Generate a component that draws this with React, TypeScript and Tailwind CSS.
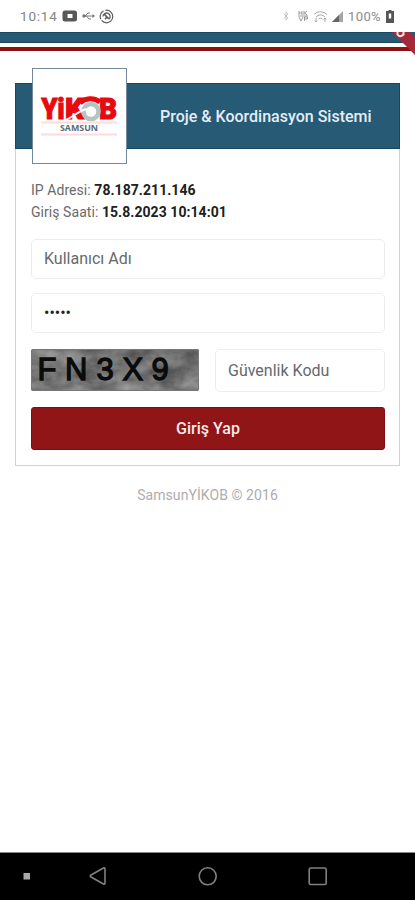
import type { ReactNode } from "react";
import { Bluetooth } from "lucide-react";

function StatusBar() {
  return (
    <div className="flex h-8 items-center justify-between pl-5 pr-[21px]">
      <div className="flex items-center">
        <span className="w-[38px] text-[13.500px] tracking-[0.060em] text-[#858585]">10:14</span>
        <svg className="ml-1" width="16" height="12" viewBox="0 0 16 12">
          <rect x="0.5" y="0.5" width="14.5" height="11" rx="2.5" fill="#585858" />
          <path d="M5.500 4h5v4h-5z" fill="#fff" />
        </svg>
        <svg className="ml-1" width="13" height="12" viewBox="0 0 13 12" fill="none" stroke="#777">
          <path d="M1 6h11M3 6l3-3h2M4.500 6l2.500 3h2" />
          <path d="M10.500 4L13 6l-2.500 2z" fill="#777" stroke="none" />
          <circle cx="2" cy="6" r="1.700" fill="#777" stroke="none" />
        </svg>
        <svg className="ml-1" width="15" height="15" viewBox="0 0 16 16" fill="none" stroke="#606060">
          <circle cx="8" cy="8" r="6.700" strokeWidth="1.300" strokeDasharray="16 1.500 10 2" />
          <path d="M4.300 8a3.800 3.800 0 1 1 6.500 2.800" strokeWidth="1.400" />
          <path d="M5.500 5.500l5 5M6.500 11l1.500-2" strokeWidth="1.700" />
        </svg>
      </div>
      <div className="flex items-center">
        <Bluetooth className="h-3 w-2.5 text-[#bbb]" strokeWidth={2} />
        <svg className="ml-1.5" width="12" height="14" viewBox="0 0 12 14" fill="none" stroke="#999">
          <path d="M2 2v4M2 4h3M5 2v4M7 2v4M10 2L7.500 4l2.500 2M2 8l2 4 2-4M7.500 12V8h3v2h-3M1 7h10" />
        </svg>
        <svg className="ml-1" width="15" height="14" viewBox="0 0 15 14" fill="none" stroke="#aaa">
          <path d="M1 5.500a9 9 0 0 1 13 0M3 8a6 6 0 0 1 9 0M5.500 10a3 3 0 0 1 4 0M3 9v4M1.500 11.500L3 13l1.500-1.500M12 13V9M10.500 10.500L12 9l1.500 1.500" />
        </svg>
        <svg className="ml-[3px]" width="13" height="13" viewBox="0 0 13 13">
          <path d="M1 12L12 1v11z" fill="#a5a5a5" />
          <path d="M1 12l7-7v7z" fill="#666" />
        </svg>
        <span className="ml-1 w-[34px] pt-px text-[13px] tracking-[0.030em] text-[#8c8c8c]">100%</span>
        <svg className="ml-1" width="8" height="13" viewBox="0 0 8 13">
          <path d="M2.500 0h3v1H8v12H0V1h2.500z" fill="#555" />
          <path d="M2.800 3.500h2.400v5H2.800z" fill="#fff" />
        </svg>
      </div>
    </div>
  );
}

function Logo() {
  return (
    <svg width="92" height="93" viewBox="0 0 92 93" fontFamily="Roboto, sans-serif" fontWeight="900">
      <g fill="#e80a0e" stroke="#e80a0e" strokeWidth="1.200" fontSize="29">
        <text x="8.500" y="50" textLength="23" lengthAdjust="spacingAndGlyphs">Yi</text>
        <text x="32" y="50" textLength="19" lengthAdjust="spacingAndGlyphs">K</text>
        <text x="66" y="50" textLength="18" lengthAdjust="spacingAndGlyphs">B</text>
      </g>
      <path d="M47 34c5-5 14-6 20-1" fill="none" stroke="#e80a0e" strokeWidth="5" />
      <circle cx="58" cy="42.500" r="7.500" fill="#fff" stroke="#b5c3c3" strokeWidth="4.500" />
      <path d="M32 51c8-2 12-9 22-11" fill="none" stroke="#fff" strokeWidth="2" />
      <path d="M8 53.500h76M8 65.500h76" stroke="#fcdcdc" strokeWidth="2" />
      <text x="27" y="62" fontSize="8" fontFamily="'Open Sans', sans-serif" fontWeight="700" textLength="38" lengthAdjust="spacingAndGlyphs" fill="#5f6a73">
        SAMSUN
      </text>
    </svg>
  );
}

function Captcha() {
  return (
    <svg width="168" height="42" viewBox="0 0 168 42" className="rounded-xs">
      <filter id="grain" x="0" y="0" width="100%" height="100%" colorInterpolationFilters="sRGB">
        <feTurbulence type="fractalNoise" baseFrequency="0.04 0.06" numOctaves="4" seed="8" />
        <feColorMatrix values="0.45 0 0 0 0.23  0.45 0 0 0 0.23  0.45 0 0 0 0.23  0 0 0 0 1" />
      </filter>
      <rect width="168" height="42" filter="url(#grain)" />
      <rect x="0.500" y="0.500" width="167" height="41" rx="1" fill="none" stroke="#777" />
      <text
        x="6.500 34 65.500 91.500 120.500"
        y="30.500"
        fontSize="31"
        fill="#0b0b0b"
        stroke="#0b0b0b"
        strokeWidth="1.300"
        fontFamily="'Liberation Sans', sans-serif"
      >
        FN3X9
      </text>
    </svg>
  );
}

function Field({ children, className }: { children: ReactNode; className: string }) {
  return (
    <div className={`flex items-center rounded-[5px] border border-[#ebedee] px-3 ${className}`}>
      {children}
    </div>
  );
}

function NavigationBar() {
  return (
    <div className="h-12 border-t border-[#888] bg-black">
      <svg width="415" height="47" viewBox="0 0 415 47" fill="none" stroke="#808080" strokeWidth="1.600">
        <rect x="23.500" y="20" width="6.500" height="6.500" fill="#aaa" stroke="none" />
        <path d="M91 22L103.500 15q1.500-.8 1.500 1v14q0 1.800-1.500 1L91 24q-1.500-1 0-2z" />
        <circle cx="207.700" cy="23.300" r="8.500" />
        <rect x="309.200" y="15" width="17" height="16.500" rx="1.500" />
      </svg>
    </div>
  );
}

export default function App() {
  return (
    <div className="relative flex h-[900px] w-[415px] flex-col overflow-hidden bg-white font-[Roboto,sans-serif]">
      <StatusBar />
      <div className="h-[11px] border-y border-[#184763] bg-[#265a75]" />
      <div className="mt-1 h-1 bg-[#8b1113]" />

      {/* debug ribbon, cut off by the status bar */}
      <div className="absolute right-0 top-8 h-7 w-8">
        <svg width="32" height="28" viewBox="0 0 32 28">
          <path d="M9 0h18l5 5v18z" fill="#a5293a" />
          <path d="M27 0h5v5z" fill="#265a75" />
          <path d="M14.500-1v3.500q2.500 3.500 6 0V-1" fill="none" stroke="#f4e6e8" strokeWidth="2" />
        </svg>
      </div>

      <main className="mx-[15px] mt-8 h-[383px] border border-[#cfd2d5]">
        <header className="-mx-px -mt-px flex h-[66px] items-center border border-[#184763] bg-[#265a75] pl-4">
          <div className="flex h-24 w-[95px] shrink-0 border border-[#75899b] bg-white">
            <Logo />
          </div>
          <h1 className="ml-[33px] pt-px text-[16px] font-medium whitespace-nowrap text-[#e4eef8]">
            Proje &amp; Koordinasyon Sistemi
          </h1>
        </header>

        <div className="pl-[15px] pr-3.5 pt-[31px]">
          <div className="text-[14px] leading-[21.500px] tracking-[0.004em] text-[#6a6a6a]">
            <p>
              IP Adresi: <b className="text-[#202020]">78.187.211.146</b>
            </p>
            <p>
              Giriş Saati: <b className="text-[#202020]">15.8.2023 10:14:01</b>
            </p>
          </div>
          <Field className="mt-4 h-10 text-[#66696b]">Kullanıcı Adı</Field>
          <Field className="mt-3.5 h-10 text-[#222]">•••••</Field>
          <div className="mt-4 flex justify-between">
            <Captcha />
            <Field className="h-[43px] w-[170px] text-[#66696b]">Güvenlik Kodu</Field>
          </div>
          <button className="mt-[15px] h-[43px] w-full rounded-[3px] border border-[#850c0e] bg-[#901517] text-[16px] font-medium text-[#fae9e9]">
            Giriş Yap
          </button>
        </div>
      </main>
      <footer className="mt-[19px] text-center text-[14px] tracking-[0.005em] text-[#adadad]">SamsunYİKOB © 2016</footer>
      <div className="mt-auto">
        <NavigationBar />
      </div>
    </div>
  );
}
